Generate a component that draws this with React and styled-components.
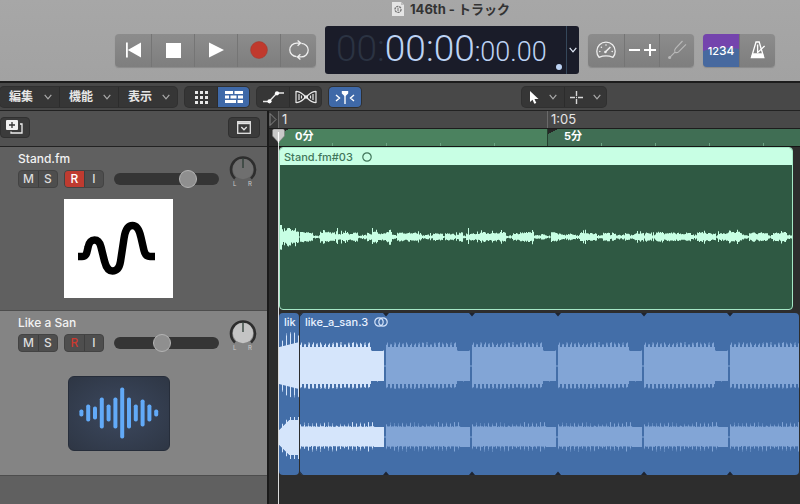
import React from "react";
import styled, { createGlobalStyle, css } from "styled-components";

const GlobalStyle = createGlobalStyle`
  *, *::before, *::after { box-sizing: border-box; }
  html, body { margin: 0; background: #2d2d2d; }
  body {
    font-family: Inter, "Noto Sans CJK JP", sans-serif;
    font-size: 12px;
    color: #e6e6e6;
  }
  button { font: inherit; color: inherit; border: 0; padding: 0; background: none; }
  svg { display: block; }
  h1, h2, p { margin: 0; font-weight: inherit; font-size: inherit; }
`;

/* ---------- window ---------- */

const Window = styled.div`
  min-height: 100vh;
  display: flex;
  flex-direction: column;
  overflow: hidden;
`;

const Header = styled.header`
  background: linear-gradient(#a7a7a7, #a2a2a2);
  border-bottom: 2px solid #1c1c1c;
  padding-bottom: 7px;
`;

const Title = styled.h1`
  display: flex;
  align-items: center;
  justify-content: center;
  gap: 6px;
  height: 18px;
  margin-bottom: 8px;
  padding-left: 102px;
  font-size: 13px;
  font-weight: 700;
  line-height: 18px;
  color: #333;
`;

const ControlBar = styled.div`
  display: flex;
  align-items: center;
  justify-content: flex-end;
  gap: 9px;
  padding-right: 25px;
`;

const Group = styled.div`
  display: flex;
  height: 33px;
  border-radius: 4px;
  overflow: hidden;
  background: linear-gradient(#8c8c8c, #7e7e7e);
  box-shadow: 0 1px 1px #8a8a8a;
`;

const BarButton = styled.button`
  width: ${(p) => (p.$wide ? 43 : p.$narrow ? 35 : 36)}px;
  display: grid;
  place-items: center;
  color: #fff;
  & + & { border-left: 1px solid #757575; }
`;

const CountInButton = styled(BarButton)`
  background: radial-gradient(ellipse 38px 20px at 60% 100%, #47699f 95%, #7444ad 100%);
  display: flex;
  align-items: baseline;
  justify-content: center;
  font-size: 11px;
  font-weight: 500;
  line-height: 33px;
`;

const BigDigit = styled.span`
  font-size: 12px;
`;

const Lcd = styled.div`
  display: flex;
  width: 254px;
  height: 48px;
  border-radius: 3px;
  background: #1a1c29;
  color: #bdd3f4;
`;

const LcdTime = styled.div`
  flex: 1;
  display: flex;
  align-items: baseline;
  padding-left: 11px;
  font-family: Roboto, sans-serif;
  font-weight: 300;
  font-size: 37px;
  line-height: 46px;
  white-space: nowrap;
`;

const Dim = styled.span`
  color: #2b3342;
`;

const Frames = styled.span`
  font-size: 27px;
`;

const LcdDot = styled.span`
  flex: none;
  align-self: flex-end;
  width: 6px;
  height: 6px;
  margin: 0 4px 4px -10px;
  border-radius: 50%;
  background: #bdd3f4;
`;

const LcdMenu = styled.button`
  width: 13px;
  display: grid;
  place-items: center;
  border-left: 1px solid #35475a;
`;

/* ---------- toolbar ---------- */

const Toolbar = styled.div`
  display: flex;
  gap: 8px;
  padding: 4px 0 3px;
  background: #484848;
  border-bottom: 1px solid #222;
`;

const ToolGroup = styled.div`
  display: flex;
  height: 20px;
  border-radius: 4px;
  overflow: hidden;
  background: #363636;
  box-shadow: 0 0 0 1px #303030;
  ${(p) => p.$tools && css`margin-left: 153px;`}
`;

const MenuButton = styled.button`
  display: flex;
  align-items: center;
  justify-content: space-between;
  width: 59px;
  padding: 0 7px 0 9px;
  font-size: 12px;
  font-weight: 700;
  line-height: 20px;
  & + & { border-left: 1px solid #2c2c2c; }
`;

const ToolButton = styled.button`
  display: flex;
  align-items: center;
  justify-content: center;
  gap: 10px;
  width: ${(p) => (p.$wide ? 42 : 32)}px;
  background: ${(p) => (p.$on ? "#3f69a8" : "transparent")};
  & + & { border-left: 1px solid #2c2c2c; }
`;

/* ---------- track list ---------- */

const Main = styled.main`
  flex: 1;
  display: grid;
  grid-template-columns: 269px minmax(0, 1fr);
`;

const TrackList = styled.section`
  display: flex;
  flex-direction: column;
  background: #606060;
  border-right: 2px solid #1a1a1a;
`;

const ListBar = styled.div`
  display: flex;
  align-items: center;
  justify-content: space-between;
  height: 36px;
  padding: 0 7px 3px 0;
  background: #515151;
  border-bottom: 1px solid #222;
`;

const SmallButton = styled.button`
  display: grid;
  place-items: center;
  width: ${(p) => (p.$edge ? 30 : 32)}px;
  height: 21px;
  padding-right: ${(p) => (p.$edge ? 2 : 0)}px;
  border-radius: 4px;
  background: #3b3b3b;
  border: 1px solid #303030;
`;

const Track = styled.article`
  height: ${(p) => (p.$selected ? 165 : 164)}px;
  padding: 3px 10px 0 18px;
  background: ${(p) => (p.$selected ? "#848484" : "#606060")};
  border-bottom: 1px solid #4d4d4d;
`;

const TrackTop = styled.div`
  display: flex;
  justify-content: space-between;
`;

const TrackName = styled.h2`
  height: 18px;
  margin-bottom: 2px;
  font-size: 12px;
  font-weight: 500;
  line-height: 18px;
  color: #f2f2f2;
`;

const Controls = styled.div`
  display: flex;
  align-items: center;
  gap: 6px;
`;

const Pair = styled.div`
  display: flex;
  height: 18px;
  border-radius: 4px;
  overflow: hidden;
  background: #4e4e4e;
  border: 1px solid #434343;
`;

const Flag = styled.button`
  width: 19px;
  font-size: 12px;
  font-weight: 500;
  line-height: 16px;
  color: #dcdcdc;
  & + & { border-left: 1px solid #3e3e3e; }
  ${(p) => p.$state === "armed" && css`background: #bf3b30; color: #fff;`}
  ${(p) => p.$state === "ready" && css`color: #cb3a30;`}
`;

const Volume = styled.input`
  appearance: none;
  width: 105px;
  height: 18px;
  margin: 0 0 0 4px;
  background: transparent;
  &::-webkit-slider-runnable-track {
    height: 12px;
    border-radius: 6px;
    background: #353535;
  }
  &::-webkit-slider-thumb {
    appearance: none;
    width: 18px;
    height: 18px;
    margin-top: -3px;
    border-radius: 50%;
    background: #8f8f8f;
    border: 1px solid #b4b4b4;
  }
`;

const KnobBox = styled.div`
  padding-top: 5px;
`;

const Art = styled.div`
  display: flex;
  justify-content: center;
  padding: ${(p) => (p.$tile ? 24 : 11)}px 38px 0 0;
`;

const LogoTile = styled.div`
  width: 109px;
  height: 99px;
  background: #fff;
`;

const WaveTile = styled.div`
  width: 102px;
  height: 75px;
  border-radius: 6px;
  background: radial-gradient(#384357 30%, #2e3644);
  border: 1px solid #262d3a;
`;

/* ---------- arrangement ---------- */

const Arrange = styled.section`
  position: relative;
  display: flex;
  flex-direction: column;
  background: #2d2d2d;
`;

const Bars = styled.div`
  display: flex;
  height: 18px;
  background: #484848;
  border-bottom: 1px solid #1c1c1c;
`;

const CycleStart = styled.div`
  width: 9px;
  padding-top: 2px;
  background: #363636;
`;

const BarCell = styled.div`
  padding-left: 3px;
  font-size: 13px;
  line-height: 16px;
  border-left: 1px solid #6a6a6a;
  ${(p) => (p.$last ? css`flex: 1;` : css`width: 269px;`)}
`;

const Markers = styled.div`
  display: flex;
  height: 18px;
  padding-left: 9px;
  border-bottom: 1px solid #151515;
`;

const Marker = styled.div`
  padding-left: 16px;
  font-size: 11px;
  font-weight: 700;
  line-height: 15px;
  color: #fff;
  border-left: 1px solid #24402f;
  ${(p) => (p.$last ? css`flex: 1;` : css`width: 269px;`)}
  background:
    linear-gradient(to bottom right, #262626 50%, transparent 50%) 0 0 / 10px 5px no-repeat,
    repeating-linear-gradient(90deg, transparent 0 53px, #6ca583 53px 54px) 0 100% / 100% 3px no-repeat,
    ${(p) => (p.$last ? "#406e54" : "#4b825f")};
`;

const Lane = styled.div`
  display: flex;
  padding-left: 10px;
  padding-top: ${(p) => (p.$first ? 0 : 3)}px;
`;

const GreenRegion = styled.div`
  flex: 1;
  margin-right: 7px;
  border: 1px solid #a5e8c6;
  border-radius: 4px;
  overflow: hidden;
  background: #2f5943;
`;

const GreenTitle = styled.div`
  display: flex;
  align-items: center;
  gap: 9px;
  height: 17px;
  padding-left: 4px;
  background: #c8ffe4;
  color: #41765a;
  font-size: 11px;
  font-weight: 500;
`;

const BlueRegion = styled.div`
  position: relative;
  flex: ${(p) => (p.$grow ? 1 : "none")};
  width: ${(p) => (p.$grow ? "auto" : "20px")};
  margin-right: 1px;
  height: 162px;
  border-radius: 4px;
  overflow: hidden;
  background: #436ea8;
`;

const BlueTitle = styled.div`
  position: absolute;
  inset: 0 auto auto 5px;
  display: flex;
  align-items: center;
  gap: 6px;
  height: 18px;
  font-size: 11px;
  font-weight: 500;
  color: #e8f1ff;
`;

const Loops = styled.div`
  display: flex;
  & > svg { flex: none; }
`;

const Playhead = styled.div`
  position: absolute;
  top: 18px;
  bottom: 0;
  left: 3px;
  width: 13px;
  background: linear-gradient(#dcdcdc, #dcdcdc) 6px 0 / 1px 100% no-repeat;
`;

/* ---------- wave data ---------- */

function randomSource(seed) {
  let s = seed;
  return () => {
    s = (s * 16807) % 2147483647;
    return s / 2147483647;
  };
}

function envelope(heights, centre, step = 1) {
  return heights
    .map(([up, down], i) => `M${i * step} ${centre - up}h${step}V${centre + down}h-${step}z`)
    .join("");
}

const rnd = randomSource(4821);

const voice = (() => {
  const out = [];
  let level = 3;
  let left = 0;
  for (let i = 0; i < 512; i++) {
    if (left <= 0) {
      level = rnd() > 0.3 ? 2.6 + rnd() * 2 : 0.8 + rnd();
      left = 2 + Math.floor(rnd() * 7);
    }
    left -= 1;
    let a = level + rnd() * 1.4 - 0.4;
    if (rnd() > 0.94) a += 2.5;
    if (i < 19) a = 5 + rnd() * 4;
    if (i < 2) a = 12;
    out.push([a, a * (0.8 + rnd() * 0.3)]);
  }
  [57, 92, 188].forEach((i) => { out[i] = [9, 7]; });
  return out;
})();

const loopTop = Array.from({ length: 168 }, (_, i) => {
  if (i > 141) return [i % 23 === 5 ? 16 : 15, i % 19 === 3 ? 16 : 15];
  const tooth = i % 8 < 4;
  return [tooth ? 21 + rnd() * 3 : 19, tooth ? 21 + rnd() * 2 : 18];
});

const loopLow = Array.from({ length: 168 }, (_, i) => {
  if (i > 148) return [10, 10];
  const tooth = i % 8 < 2;
  return [tooth ? 11 + rnd() * 4 : 10 + rnd(), tooth ? 11 + rnd() * 4 : 9 + rnd()];
});

const introTop = Array.from({ length: 40 }, (_, i) => {
  const tooth = i % 8 > 5;
  const lift = i > 11 ? 10 : 4;
  return [tooth ? 20 + lift + rnd() * 4 : 19 + i / 8, tooth ? 19 + lift + rnd() * 4 : 18 + i / 8];
});

const introLow = Array.from({ length: 40 }, (_, i) => {
  const base = 8 + Math.min(i, 20) / 2;
  const tooth = i % 8 > 5;
  return [base + (tooth ? 3 : 0) - 1, base + (tooth ? 4 : 0)];
});

const voicePath = envelope(voice, 72);
const loopPath = envelope(loopTop, 53, 0.5) + envelope(loopLow, 124, 0.5);
const introPath = envelope(introTop, 53, 0.5) + envelope(introLow, 124, 0.5);

/* ---------- icons ---------- */

const Chevron = ({ color = "#aaa" }) => (
  <svg width="8" height="6" viewBox="0 0 8 6" fill="none" stroke={color} strokeWidth="1.2" aria-hidden="true">
    <path d="M.7 .8 4 4.8 7.3 .8" />
  </svg>
);

const DocIcon = () => (
  <svg width="12" height="14" viewBox="0 0 12 14" aria-hidden="true">
    <path d="M0 0h9l3 3v11H0z" fill="#e5e5e5" />
    <path d="M9 0v3h3z" fill="#bdbdbd" />
    <circle cx="6" cy="7.4" r="3" fill="none" stroke="#777" strokeWidth="1.4" strokeDasharray="2.2 .8" />
    <path d="M6 5.8v3.2" stroke="#777" />
  </svg>
);

const RewindIcon = () => (
  <svg width="15" height="16" viewBox="0 0 15 16" fill="#fff" aria-hidden="true">
    <path d="M0 .5h1.8v15H0zM15 .5v15L1.8 8z" />
  </svg>
);
const StopIcon = () => (
  <svg width="15" height="15" viewBox="0 0 15 15" aria-hidden="true"><path fill="#fff" d="M0 0h15v15H0z" /></svg>
);
const PlayIcon = () => (
  <svg width="15" height="16" viewBox="0 0 15 16" aria-hidden="true"><path fill="#fff" d="M0 .5 15 8 0 15.5z" /></svg>
);
const RecordIcon = () => (
  <svg width="18" height="18" viewBox="0 0 18 18" aria-hidden="true">
    <circle cx="9" cy="9" r="8.4" fill="#c0392d" stroke="#a33a30" strokeWidth=".6" />
  </svg>
);
const CycleIcon = () => (
  <svg width="22" height="20" viewBox="0 0 22 20" fill="none" stroke="#efefef" strokeWidth="1.3" aria-hidden="true">
    <path d="M8.6 16.6C4.7 16.4 1.8 13.4 1.8 10c0-3.9 3.1-6.9 7-6.9h3.4M9.6 .5l3 2.6-3 2.7" />
    <path d="M13.4 3.4c3.9.2 6.8 3.2 6.8 6.6 0 3.9-3.1 6.9-7 6.9H9.8M12.4 14.2l-3 2.7 3 2.6" />
  </svg>
);
const GaugeIcon = () => (
  <svg width="20" height="18" viewBox="0 0 20 18" fill="none" stroke="#eee" aria-hidden="true">
    <path d="M3 16.3C1.5 14.6.8 12.6.8 10.3.8 5.2 4.9 1.2 10 1.2s9.2 4 9.2 9.1c0 2.3-.7 4.3-2.2 6-4.6-1.8-9.4-1.8-14 0z" strokeWidth="1.3" />
    <path d="M9.6 10.8l4.8-4.8" strokeWidth="1.5" />
    <g fill="#eee" stroke="none">
      <circle cx="9.4" cy="11" r="1.3" /><circle cx="3.8" cy="10.5" r=".8" /><circle cx="5.4" cy="6.3" r=".8" />
      <circle cx="10" cy="4" r=".8" /><circle cx="16.2" cy="10.5" r=".8" />
    </g>
  </svg>
);
const PlusMinusIcon = () => (
  <svg width="28" height="14" viewBox="0 0 28 14" stroke="#fff" strokeWidth="2" aria-hidden="true">
    <path d="M1 7h11M16 7h12M22 1v12" />
  </svg>
);
const ForkIcon = () => (
  <svg width="20" height="20" viewBox="0 0 20 20" fill="none" stroke="#b8b8b8" strokeWidth="1.2" aria-hidden="true">
    <path d="M2.5 17.7 8 12.2M8 12.2c-.9-1.5-.6-2.5.6-3.8L15.5 1M8 12.2c1.5.9 2.5.6 3.8-.6L19 4.3" />
    <circle cx="2.6" cy="17.5" r="1.5" fill="#b8b8b8" stroke="none" />
  </svg>
);
const MetronomeIcon = () => (
  <svg width="16" height="18" viewBox="0 0 16 18" fill="none" stroke="#fff" strokeWidth="1.3" aria-hidden="true">
    <path d="M6 1h3.2l4.6 15.5H1.4z" />
    <path d="M2.5 12.2h10.4l1.3 4.8H1z" fill="#fff" stroke="none" />
    <path d="M7.6 12V3.5M7.6 11.6 14.6 5" />
  </svg>
);
const GridIcon = () => (
  <svg width="13" height="13" viewBox="0 0 13 13" fill="#e8e8e8" aria-hidden="true">
    {[0, 5, 10].map((y) => [0, 5, 10].map((x) => <rect key={`${x}-${y}`} x={x} y={y} width="3" height="3" />))}
  </svg>
);
const RegionsIcon = () => (
  <svg width="18" height="12" viewBox="0 0 18 12" fill="#fff" aria-hidden="true">
    <path d="M0 0h8v3H0zM9.500 0H18v3H9.500zM0 4.500h4v3H0zM5.500 4.500h6v3h-6zM13 4.500h5v3h-5zM0 9h11v3H0zM12.500 9H18v3h-5.500z" />
  </svg>
);
const AutomationIcon = () => (
  <svg width="21" height="13" viewBox="0 0 21 13" fill="none" stroke="#e8e8e8" strokeWidth="1.3" aria-hidden="true">
    <path d="M0 10.500h6L14 2h7" />
    <circle cx="6.500" cy="10.300" r="2.100" fill="#fff" stroke="none" />
    <circle cx="14" cy="2.300" r="2.100" fill="#fff" stroke="none" />
  </svg>
);
const FlexIcon = () => (
  <svg width="22" height="14" viewBox="0 0 22 14" fill="none" stroke="#e8e8e8" strokeWidth="1.2" aria-hidden="true">
    <path d="M1 1v12M21 1v12M1 1.300C6 1.300 8.500 5 11 7s5 5.700 10 5.700M1 12.700C6 12.700 8.500 9 11 7s5-5.700 10-5.700" />
    <path d="M4 4v6M6.500 5.500v3M15.500 5.500v3M18 4v6" />
    <path d="M9 5.500h4v3H9z" fill="#e8e8e8" stroke="none" />
  </svg>
);
const CatchIcon = () => (
  <svg width="20" height="13" viewBox="0 0 20 13" fill="none" stroke="#fff" strokeWidth="1.4" aria-hidden="true">
    <path d="M1 4l3.500 3L1 10M19 4l-3.500 3 3.500 3M10 4v9" />
    <path d="M6.800 0h6.400v2.500L10 5.500 6.800 2.500z" fill="#fff" stroke="none" />
  </svg>
);
const PointerIcon = () => (
  <svg width="9" height="13" viewBox="0 0 9 13" aria-hidden="true">
    <path fill="#fff" d="M0 0v11l2.500-2.300 1.800 4.100 2-.9-1.800-4H8.500z" />
  </svg>
);
const CrossIcon = () => (
  <svg width="13" height="13" viewBox="0 0 13 13" stroke="#d8d8d8" strokeWidth="1.4" aria-hidden="true">
    <path d="M0 6.500h5M8 6.500h5M6.500 0v5M6.500 8v5M6 6.500h1" />
  </svg>
);
const AddTrackIcon = () => (
  <svg width="17" height="14" viewBox="0 0 17 14" aria-hidden="true">
    <rect width="12" height="10" rx="1" fill="#f0f0f0" />
    <path d="M6 2v6M3 5h6" stroke="#333" strokeWidth="1.3" />
    <path d="M14 4h2v9H5v-1.500" fill="none" stroke="#eee" strokeWidth="1.3" />
  </svg>
);
const ConfigIcon = () => (
  <svg width="14" height="13" viewBox="0 0 14 13" fill="none" stroke="#e4e4e4" strokeWidth="1.3" aria-hidden="true">
    <rect x=".7" y=".7" width="12.6" height="11.6" />
    <path d="M1 2.200h12" strokeWidth="2" />
    <path d="M4.300 6 7 8.800 9.700 6" />
  </svg>
);

const Knob = ({ face }) => (
  <svg width="28" height="33" viewBox="0 0 28 33" role="img" aria-label="パン">
    <path d="M6 23.500A12 12 0 1 1 22 23.500" fill="none" stroke="#2d2d2d" strokeWidth="2.6" />
    <circle cx="14" cy="14" r="10.2" fill={face} />
    <path d="M14 3v10" stroke="#2b3b33" strokeWidth="1.3" />
    <text x="4" y="31" fontSize="6" fill="#ccc">L</text>
    <text x="19" y="31" fontSize="6" fill="#ccc">R</text>
  </svg>
);

const StandLogo = () => (
  <svg width="109" height="99" viewBox="0 0 109 99" role="img" aria-label="Stand.fm">
    <path
      d="M14 57.500h4c5 0 5-5 6-9 1-5 3-7.500 6.500-7.500 4 0 5.500 3 6.500 7l3.500 14c1.500 6 3.500 10 8 10s7-3.500 8-9.500l3.500-23c1-7 3.500-13 8.500-13s7 5 8.500 12l3 13c1 4 2.500 6 6 6h5"
      fill="none" stroke="#000" strokeWidth="7.5"
    />
  </svg>
);

const barHeights = [7, 17, 13, 31, 17, 31, 51, 31, 17, 27, 17, 7];
const AudioIcon = () => (
  <svg width="100" height="73" viewBox="0 0 100 73" role="img" aria-label="オーディオ">
    {barHeights.map((h, i) => (
      <rect key={i} x={10.4 + i * 6.8} y={36 - h / 2} width="4" height={h} rx="1.8" fill="#62aaf8" />
    ))}
  </svg>
);

const LoopIcon = () => (
  <svg width="14" height="10" viewBox="0 0 14 10" fill="none" stroke="#d5e4fb" strokeWidth="1.2" aria-hidden="true">
    <circle cx="5" cy="5" r="4.2" /><circle cx="9" cy="5" r="4.2" />
  </svg>
);
const CircleIcon = () => (
  <svg width="10" height="10" viewBox="0 0 10 10" fill="none" stroke="#41765a" strokeWidth="1.2" aria-hidden="true">
    <circle cx="5" cy="5" r="4.2" />
  </svg>
);

const LoopWave = ({ first }) => (
  <svg width="86" height="162" viewBox="0 0 86 162" aria-hidden="true">
    <path d={loopPath} fill={first ? "#d5e5fb" : "#82a5d6"} />
    <path d="M84 53h2M84 124h2" stroke="#82a5d6" />
    <path d="M83 0h6l-3 3.500zM83 162h6l-3-3.500zM-3 0h6L0 3.500zM-3 162h6L0 158.500z" fill="#1e2430" />
  </svg>
);

const PlayheadCap = () => (
  <svg width="13" height="14" viewBox="0 0 13 14" aria-hidden="true">
    <path d="M1.500 0h10l1 1.500V7l-6 6.500L.5 7V1.500z" fill="#c9c9c9" stroke="#777" strokeWidth=".6" />
    <path d="M6.500 3v11" stroke="#fff" strokeWidth="1.2" />
  </svg>
);

const CycleTriangle = () => (
  <svg width="8" height="13" viewBox="0 0 8 13" aria-hidden="true">
    <path d="M1 .5 7 6.500 1 12.500z" fill="#3a3a3a" stroke="#999" strokeWidth=".8" />
  </svg>
);

/* ---------- page ---------- */

function TrackHeader({ name, volume, record, face, selected, children }) {
  return (
    <Track $selected={selected}>
      <TrackTop>
        <div>
          <TrackName>{name}</TrackName>
          <Controls>
            <Pair>
              <Flag>M</Flag>
              <Flag>S</Flag>
            </Pair>
            <Pair>
              <Flag $state={record}>R</Flag>
              <Flag>I</Flag>
            </Pair>
            <Volume type="range" min="0" max="100" defaultValue={volume} aria-label={`${name} 音量`} />
          </Controls>
        </div>
        <KnobBox>
          <Knob face={face} />
        </KnobBox>
      </TrackTop>
      {children}
    </Track>
  );
}

export default function App() {
  return (
    <Window>
      <GlobalStyle />
      <Header>
        <Title><DocIcon />146th - トラック</Title>
        <ControlBar>
          <Group>
            <BarButton aria-label="先頭へ"><RewindIcon /></BarButton>
            <BarButton $wide aria-label="停止"><StopIcon /></BarButton>
            <BarButton $wide aria-label="再生"><PlayIcon /></BarButton>
            <BarButton $wide aria-label="録音"><RecordIcon /></BarButton>
            <BarButton aria-label="サイクル"><CycleIcon /></BarButton>
          </Group>
          <Lcd>
            <LcdTime>
              <Dim>00:</Dim>
              <span>00:00</span>
              <Frames>:00.00</Frames>
            </LcdTime>
            <LcdDot />
            <LcdMenu aria-label="表示モード"><Chevron color="#e4ecfa" /></LcdMenu>
          </Lcd>
          <Group>
            <BarButton aria-label="テンポ"><GaugeIcon /></BarButton>
            <BarButton $narrow aria-label="増減"><PlusMinusIcon /></BarButton>
            <BarButton $narrow aria-label="チューナー"><ForkIcon /></BarButton>
          </Group>
          <Group>
            <CountInButton>12<BigDigit>34</BigDigit></CountInButton>
            <BarButton aria-label="メトロノーム"><MetronomeIcon /></BarButton>
          </Group>
        </ControlBar>
      </Header>

      <Toolbar>
        <ToolGroup>
          <MenuButton>編集<Chevron /></MenuButton>
          <MenuButton>機能<Chevron /></MenuButton>
          <MenuButton>表示<Chevron /></MenuButton>
        </ToolGroup>
        <ToolGroup>
          <ToolButton aria-label="グリッド"><GridIcon /></ToolButton>
          <ToolButton $on aria-label="リージョン"><RegionsIcon /></ToolButton>
        </ToolGroup>
        <ToolGroup>
          <ToolButton aria-label="オートメーション"><AutomationIcon /></ToolButton>
          <ToolButton aria-label="フレックス"><FlexIcon /></ToolButton>
        </ToolGroup>
        <ToolGroup>
          <ToolButton $on aria-label="キャッチ"><CatchIcon /></ToolButton>
        </ToolGroup>
        <ToolGroup $tools>
          <ToolButton $wide aria-label="ポインタツール"><PointerIcon /><Chevron /></ToolButton>
          <ToolButton $wide aria-label="マーキーツール"><CrossIcon /><Chevron /></ToolButton>
        </ToolGroup>
      </Toolbar>

      <Main>
        <TrackList>
          <ListBar>
            <SmallButton $edge aria-label="トラックを追加"><AddTrackIcon /></SmallButton>
            <SmallButton aria-label="ヘッダを設定"><ConfigIcon /></SmallButton>
          </ListBar>
          <TrackHeader name="Stand.fm" volume={75} record="armed" face="#6f6f6f">
            <Art><LogoTile><StandLogo /></LogoTile></Art>
          </TrackHeader>
          <TrackHeader name="Like a San" volume={45} record="ready" face="#c4c4c4" selected>
            <Art $tile><WaveTile><AudioIcon /></WaveTile></Art>
          </TrackHeader>
        </TrackList>

        <Arrange>
          <Bars>
            <CycleStart><CycleTriangle /></CycleStart>
            <BarCell>1</BarCell>
            <BarCell $last>1:05</BarCell>
          </Bars>
          <Markers>
            <Marker>0分</Marker>
            <Marker $last>5分</Marker>
          </Markers>
          <Lane $first>
            <GreenRegion>
              <GreenTitle>Stand.fm#03<CircleIcon /></GreenTitle>
              <svg width="100%" height="144" viewBox="0 0 512 144" preserveAspectRatio="none" aria-hidden="true">
                <path d={voicePath} fill="#c8ffe4" />
              </svg>
            </GreenRegion>
          </Lane>
          <Lane>
            <BlueRegion>
              <BlueTitle>lik</BlueTitle>
              <svg width="20" height="162" viewBox="0 0 20 162" aria-hidden="true">
                <path d={introPath} fill="#d5e5fb" />
              </svg>
            </BlueRegion>
            <BlueRegion $grow>
              <BlueTitle>like_a_san.3<LoopIcon /></BlueTitle>
              <Loops>
                {Array.from({ length: 24 }, (_, i) => <LoopWave key={i} first={i === 0} />)}
              </Loops>
            </BlueRegion>
          </Lane>
          <Playhead><PlayheadCap /></Playhead>
        </Arrange>
      </Main>
    </Window>
  );
}
